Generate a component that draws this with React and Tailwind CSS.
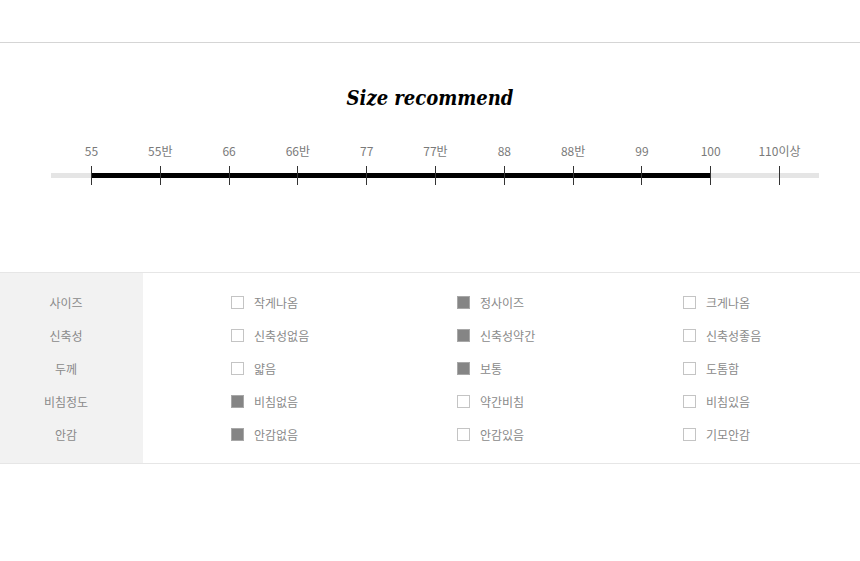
import React from "react";

const sizes = ["55", "55반", "66", "66반", "77", "77반", "88", "88반", "99", "100", "110이상"];

const rows = [
  { label: "사이즈", opts: [["작게나옴", false], ["정사이즈", true], ["크게나옴", false]] },
  { label: "신축성", opts: [["신축성없음", false], ["신축성약간", true], ["신축성좋음", false]] },
  { label: "두께", opts: [["얇음", false], ["보통", true], ["도톰함", false]] },
  { label: "비침정도", opts: [["비침없음", true], ["약간비침", false], ["비침있음", false]] },
  { label: "안감", opts: [["안감없음", true], ["안감있음", false], ["기모안감", false]] },
];

function Box({ on }) {
  return on ? (
    <span className="block w-[13px] h-[13px] bg-[#858585] border border-[#a8a8a8]" />
  ) : (
    <span className="block w-[13px] h-[13px] bg-white border border-[#c4c4c4]" />
  );
}

export default function App() {
  return (
    <div className="w-[860px] h-[561px] bg-white font-['Noto_Sans_CJK_KR',sans-serif]">
      <div className="h-[42px]" />
      <div className="border-t border-[#d5d5d5]" />
      <h2 className="mt-[41px] text-center text-[20px] leading-[28px] font-bold italic text-black font-['DejaVu_Serif_Condensed','DejaVu_Serif',serif]">
        Size recommend
      </h2>
      <div className="mt-[31px] ml-[51px] w-[768px] relative">
        <div className="absolute left-0 top-[30px] h-[5px] w-full bg-[#e5e5e5]" />
        <div className="absolute left-[40px] top-[30px] h-[5px] w-[619px] bg-black" />
        <div className="relative ml-[40px] w-[689px] flex justify-between">
          {sizes.map((s) => (
            <div key={s} className="w-px flex flex-col items-center">
              <span className="text-[12px] leading-[16px] whitespace-nowrap text-[#7a7a7a]">{s}</span>
              <div className="mt-[7px] w-px h-[19px] bg-[#333] shrink-0" />
            </div>
          ))}
        </div>
      </div>
      <div className="mt-[87px] border-t border-b border-[#e6e6e6] flex">
        <div className="w-[143px] bg-[#f2f2f2] pt-[13px] pb-[12px]">
          {rows.map((r) => (
            <div key={r.label} className="h-[33px] w-[132px] flex items-center justify-center text-[12px] text-[#8a8a8a]">
              {r.label}
            </div>
          ))}
        </div>
        <div className="flex-1 pt-[13px] pb-[12px] pl-[88px]">
          {rows.map((r) => (
            <div key={r.label} className="h-[33px] grid grid-cols-[226px_226px_1fr] items-center">
              {r.opts.map(([t, on]) => (
                <div key={t} className="flex items-center gap-[10px]">
                  <Box on={on} />
                  <span className="text-[12px] leading-[16px] text-[#8a8a8a]">{t}</span>
                </div>
              ))}
            </div>
          ))}
        </div>
      </div>
    </div>
  );
}
